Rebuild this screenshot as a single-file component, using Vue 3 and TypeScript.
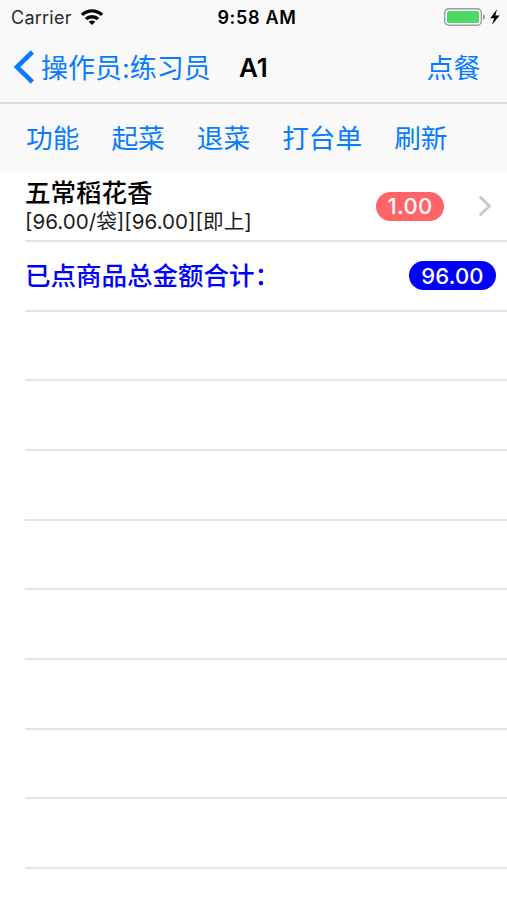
<script setup lang="ts">
const actions: string[] = ['功能', '起菜', '退菜', '打台单', '刷新']
const emptyRows = 8
</script>

<template>
  <div class="screen">
    <header class="status">
      <div class="carrier">
        <span>Carrier</span>
        <svg class="wifi" viewBox="0 0 24 18" width="24" height="18">
          <g fill="none" stroke="#050505" stroke-width="3.4">
            <path d="M2 6.9 C7.6 1.5 16.4 1.5 22 6.9" />
            <path d="M5.9 11 C9.2 7.9 14.8 7.9 18.1 11" />
          </g>
          <path d="M8.6 13.6 C10.5 12 13.5 12 15.4 13.6 L12 17 Z" fill="#050505" />
        </svg>
      </div>
      <div class="clock">9:58 AM</div>
      <div class="power">
        <svg viewBox="0 0 58 20" width="58" height="20">
          <rect x="1.7" y="1.7" width="36.6" height="16.6" rx="4.2" fill="#fff" stroke="#9b9b9b" stroke-width="1.4" />
          <rect x="4" y="4" width="32" height="12" rx="1.5" fill="#4cd964" />
          <path d="M40 7.2 Q42.2 8 42.2 10 Q42.2 12 40 12.8 Z" fill="#9b9b9b" />
          <path d="M54 2.2 L47.2 11.2 H51.2 L49 17.8 L56.6 8.5 H52.3 Z" fill="#000" />
        </svg>
      </div>
    </header>

    <nav class="nav">
      <a class="back">
        <svg viewBox="0 0 22 34" width="22" height="34">
          <path d="M19.4 2 L4 17 L19.4 32" fill="none" stroke="#087bfe" stroke-width="4.6" />
        </svg>
        <span class="caption">操作员:练习员</span>
      </a>
      <h1 class="title">A1</h1>
      <a class="order caption">点餐</a>
    </nav>

    <div class="toolbar">
      <a v-for="action in actions" :key="action">{{ action }}</a>
    </div>

    <main class="list">
      <section class="row item">
        <div class="info">
          <div class="name">五常稻花香</div>
          <div class="detail">[96.00/袋][96.00][即上]</div>
        </div>
        <span class="badge count">1.00</span>
        <svg class="chevron" viewBox="0 0 14 22" width="14" height="22">
          <path d="M1.8 1.8 L11.4 11 L1.8 20.2" fill="none" stroke="#c7c7cc" stroke-width="2.8" />
        </svg>
      </section>
      <section class="row total">
        <div class="label">已点商品总金额合计：</div>
        <span class="badge sum">96.00</span>
      </section>
      <section v-for="n in emptyRows" :key="n" class="row"></section>
    </main>
  </div>
</template>

<style>
body {
  margin: 0;
  background: #fff;
}
</style>

<style scoped>
.screen {
  width: 507px;
  height: 900px;
  overflow: hidden;
  background: #fff;
  color: #000;
  font-family: Inter, "Noto Sans CJK SC", sans-serif;
  white-space: nowrap;
}
.status {
  box-sizing: border-box;
  display: grid;
  grid-template-columns: 1fr auto 1fr;
  align-items: center;
  height: 34px;
  padding: 0 6px 0 11px;
  background: #f9f9f9;
  font-size: 18px;
}
.carrier {
  display: flex;
  align-items: center;
  gap: 8px;
  color: #2a2a2a;
  letter-spacing: 0.25px;
}
.clock {
  padding-left: 2px;
  font-weight: 600;
  letter-spacing: 0.7px;
}
.power {
  display: flex;
  justify-content: flex-end;
}
.nav {
  box-sizing: border-box;
  display: flex;
  align-items: center;
  height: 70px;
  padding: 0 26.5px 2px 13px;
  border-bottom: 2px solid #dcdcdc;
  background: #f9f9f9;
  font-size: 27px;
}
.back {
  display: flex;
  align-items: center;
  gap: 6px;
  width: 226px;
  color: #087bfe;
}
.caption {
  padding-bottom: 2px;
}
.title {
  margin: 0;
  font-size: 26px;
  font-weight: 600;
}
.order {
  margin-left: auto;
  color: #087bfe;
}
.toolbar {
  box-sizing: border-box;
  display: flex;
  align-items: center;
  gap: 32px;
  height: 68px;
  padding: 0 0 4px 26px;
  background: #f9f9f9;
  color: #087bfe;
  font-size: 26.7px;
}
.list {
  padding: 0.4px 0 0 25px;
}
.row {
  box-sizing: border-box;
  display: flex;
  align-items: center;
  height: 69.66px;
  border-bottom: 2px solid #e4e4e6;
}
.info {
  flex: 1;
  padding-top: 1px;
}
.name {
  font-size: 25.5px;
  font-weight: 500;
  line-height: 30px;
}
.detail {
  color: #1c1c1c;
  font-size: 20.6px;
  line-height: 27px;
}
.badge {
  box-sizing: border-box;
  display: flex;
  align-items: center;
  justify-content: center;
  height: 29px;
  border-radius: 15px;
  color: #fff;
  font-size: 22px;
  font-weight: 500;
}
.count {
  width: 68px;
  margin-right: 34px;
  background: #ff6469;
  letter-spacing: 0.3px;
}
.chevron {
  margin-right: 15px;
}
.label {
  flex: 1;
  padding-bottom: 4px;
  color: #00f;
  font-size: 25.5px;
  font-weight: 500;
}
.sum {
  width: 87px;
  margin-right: 11px;
  background: #00f;
  letter-spacing: 0.2px;
}
</style>
